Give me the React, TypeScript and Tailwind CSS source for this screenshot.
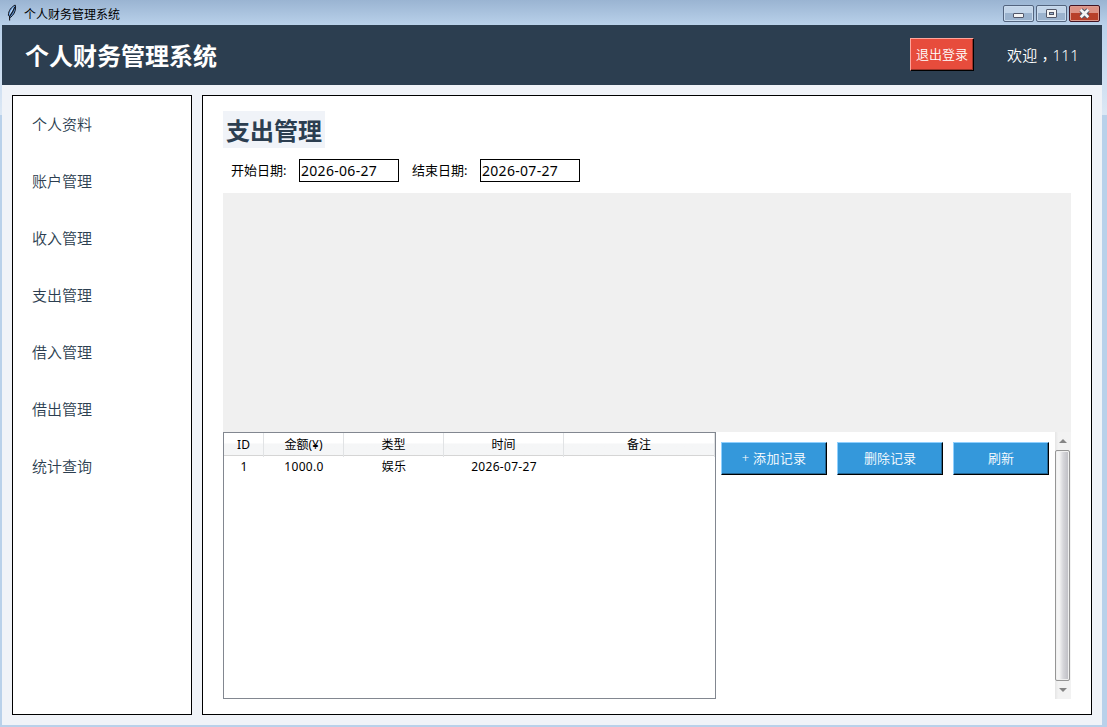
import React from 'react';

const MENU_ITEMS = ['个人资料', '账户管理', '收入管理', '支出管理', '借入管理', '借出管理', '统计查询'];

const COLUMNS = ['ID', '金额(¥)', '类型', '时间', '备注'];

const RECORDS = [['1', '1000.0', '娱乐', '2026-07-27', '']];

const FeatherIcon: React.FC = () => (
  <svg width="12" height="18" viewBox="0 0 12 18">
    <path d="M9.2 1 C5.5 2.8 2.3 6.5 2.4 11.5 L4.5 13.5 C7.5 11 9.8 7.5 9.6 3 Z" fill="#5f9ae0" stroke="#16181f" strokeWidth="1" />
    <path d="M8.2 2.6 C5.5 5 3.8 8 3.5 11 L6 7.5 Z" fill="#c3ddfa" />
    <path d="M8.8 3 C7.5 7 5 10.5 3.6 12.5 V16.5" fill="none" stroke="#16181f" strokeWidth="1.1" />
  </svg>
);

const windowButton =
  'flex h-[17px] w-[31px] items-center justify-center rounded-[2px] border border-[#53647e] bg-linear-to-b from-[#c3d5e9] from-50% to-[#9bb3ce] to-50% shadow-[inset_0_0_0_1px_#c9dbee]';

const TitleBar: React.FC = () => (
  <div className="flex h-[25px] shrink-0 items-start bg-linear-to-b from-[#9ab4d2] to-[#b9d1ea] pl-1.5">
    <div className="mt-1">
      <FeatherIcon />
    </div>
    <span className="ml-1.5 mt-[5px] flex-1 text-[12px] leading-[19px] text-black">个人财务管理系统</span>
    <div className="mr-[7px] mt-[5px] flex gap-[2px]">
      <div className={windowButton}>
        <svg width="11" height="5" className="mt-1">
          <rect x="0.5" y="0.5" width="10" height="4" rx="0.5" fill="#f4f4f4" stroke="#525769" />
        </svg>
      </div>
      <div className={windowButton}>
        <svg width="11" height="9">
          <rect x="0.5" y="0.5" width="10" height="8" rx="0.5" fill="#f4f4f4" stroke="#525769" />
          <rect x="3.5" y="3.5" width="4" height="2" fill="#9bb3ce" stroke="#525769" />
        </svg>
      </div>
      <div className="flex h-[17px] w-[31px] items-center justify-center rounded-[2px] border border-[#421423] bg-linear-to-b from-[#dd9285] from-50% to-[#b8402a] to-50% shadow-[inset_0_0_0_1px_#dc9b8f]">
        <svg width="13" height="11" viewBox="0 0 13 11">
          <path d="M3 2 L10 9 M10 2 L3 9" stroke="#525769" strokeWidth="4.6" />
          <path d="M2.7 1.8 L10.3 9.2 M10.3 1.8 L2.7 9.2" stroke="#f4f4f4" strokeWidth="2.7" />
        </svg>
      </div>
    </div>
  </div>
);

const Header: React.FC = () => (
  <header className="flex h-[60px] shrink-0 items-center bg-[#2c3e50] pl-[23px] pr-[23px] text-white">
    <h1 className="mt-0.5 flex-1 text-[24px] font-bold leading-8">个人财务管理系统</h1>
    <button className="-mt-0.5 mr-[33px] h-[33px] w-16 border border-b-black border-l-[#ffa59b] border-r-black border-t-[#ffa59b] bg-[#e74c3c] pt-px text-[13px] font-[350] shadow-[inset_-1px_-1px_0_#9a3228]">
      退出登录
    </button>
    <span className="w-[72px] whitespace-nowrap text-[15px] font-[350] leading-5 tracking-[0.2px]">
      欢迎<span className="relative top-1 font-['Noto_Sans_CJK_TC',sans-serif]">，</span>111
    </span>
  </header>
);

const Sidebar: React.FC = () => (
  <nav className="flex w-[180px] shrink-0 flex-col border border-black bg-white pl-[19px]">
    {MENU_ITEMS.map((item) => (
      <a key={item} className="h-[57px] text-[15px] font-[350] leading-[57px] text-[#2c3e50]">
        {item}
      </a>
    ))}
  </nav>
);

const DateField: React.FC<{ label: string; value: string }> = ({ label, value }) => (
  <label className="flex items-center text-[13px] text-black">
    <span className="w-[68px]">{label}</span>
    <input
      className="h-[23px] w-[100px] border border-black bg-white pl-[1px] text-[14px] tracking-[0.3px]"
      defaultValue={value}
    />
  </label>
);

const RecordTable: React.FC = () => (
  <div className="w-[493px] border border-[#828790] bg-white text-[12px] text-black">
    <div className="grid h-[23px] grid-cols-[40px_80px_100px_120px_151px] border-b border-[#d5d5d5] bg-linear-to-b from-white from-45% to-[#f5f6f7] to-50%">
      {COLUMNS.map((name) => (
        <div key={name} className="border-r border-[#e1e3e5] text-center leading-6">
          {name}
        </div>
      ))}
    </div>
    {RECORDS.map((row) => (
      <div key={row[0]} className="grid h-5 grid-cols-[40px_80px_100px_120px_151px]">
        {row.map((cell, i) => (
          <div key={i} className="text-center leading-[21px] tracking-[0.3px]">
            {cell}
          </div>
        ))}
      </div>
    ))}
  </div>
);

const ActionButton: React.FC<{ label: string; className: string }> = ({ label, className }) => (
  <button
    className={`h-[33px] border border-b-black border-l-[#8fd0ff] border-r-black border-t-[#8fd0ff] bg-[#3498db] pt-px text-[13px] font-[350] text-white shadow-[inset_-1px_-1px_0_#236592] ${className}`}
  >
    {label}
  </button>
);

const ScrollBar: React.FC = () => (
  <div className="flex w-4 flex-col bg-linear-to-r from-[#e5e5e5] to-[#f2f2f2] to-20% pr-px">
    <div className="flex h-[18px] items-center justify-center">
      <svg width="8" height="4">
        <path d="M4 0 L8 4 H0 Z" fill="#858585" />
      </svg>
    </div>
    <div className="flex-1 rounded-[2px] border border-[#959595] bg-linear-to-r from-[#f5f5f5] from-25% via-[#d6d6da] via-55% to-[#bcbcc2] shadow-[inset_0_0_0_1px_#f0f0f0]" />
    <div className="flex h-[18px] items-center justify-center">
      <svg width="8" height="4">
        <path d="M0 0 H8 L4 4 Z" fill="#858585" />
      </svg>
    </div>
  </div>
);

const ExpensePage: React.FC = () => (
  <main className="flex flex-1 flex-col border border-black bg-white px-5 pb-[15px] pt-[15px]">
    <h2 className="h-[37px] w-[102px] bg-[#f0f3f8] text-center text-[24px] font-bold leading-[39px] text-[#2c3e50]">
      支出管理
    </h2>
    <div className="mt-[11px] flex h-[23px] gap-[13px] pl-2">
      <DateField label="开始日期:" value="2026-06-27" />
      <DateField label="结束日期:" value="2026-07-27" />
    </div>
    <div className="mt-[11px] h-[239px] shrink-0 bg-[#f0f0f0]" />
    <div className="flex flex-1">
      <RecordTable />
      <div className="flex flex-1 items-start gap-2.5 pl-[5px] pt-2.5">
        <ActionButton label="+ 添加记录" className="w-[106px] tracking-[0.3px]" />
        <ActionButton label="删除记录" className="w-[106px]" />
        <ActionButton label="刷新" className="w-24" />
      </div>
      <ScrollBar />
    </div>
  </main>
);

const App: React.FC = () => {
  return (
    <div className="flex h-[727px] w-[1107px] flex-col overflow-hidden bg-[#b9d1ea] font-['Noto_Sans','Noto_Sans_CJK_SC',sans-serif]">
      <TitleBar />
      <div className="flex flex-1 bg-linear-to-b from-[#b9d1ea] to-[#dce8f5] to-[90px] bg-[length:100%_90px] bg-no-repeat pb-0.5 pl-0.5 pr-[5px]">
        <div className="flex flex-1 flex-col bg-[#f0f3f8]">
          <Header />
          <div className="flex flex-1 gap-2.5 p-2.5">
            <Sidebar />
            <ExpensePage />
          </div>
        </div>
      </div>
    </div>
  );
};

export default App;
